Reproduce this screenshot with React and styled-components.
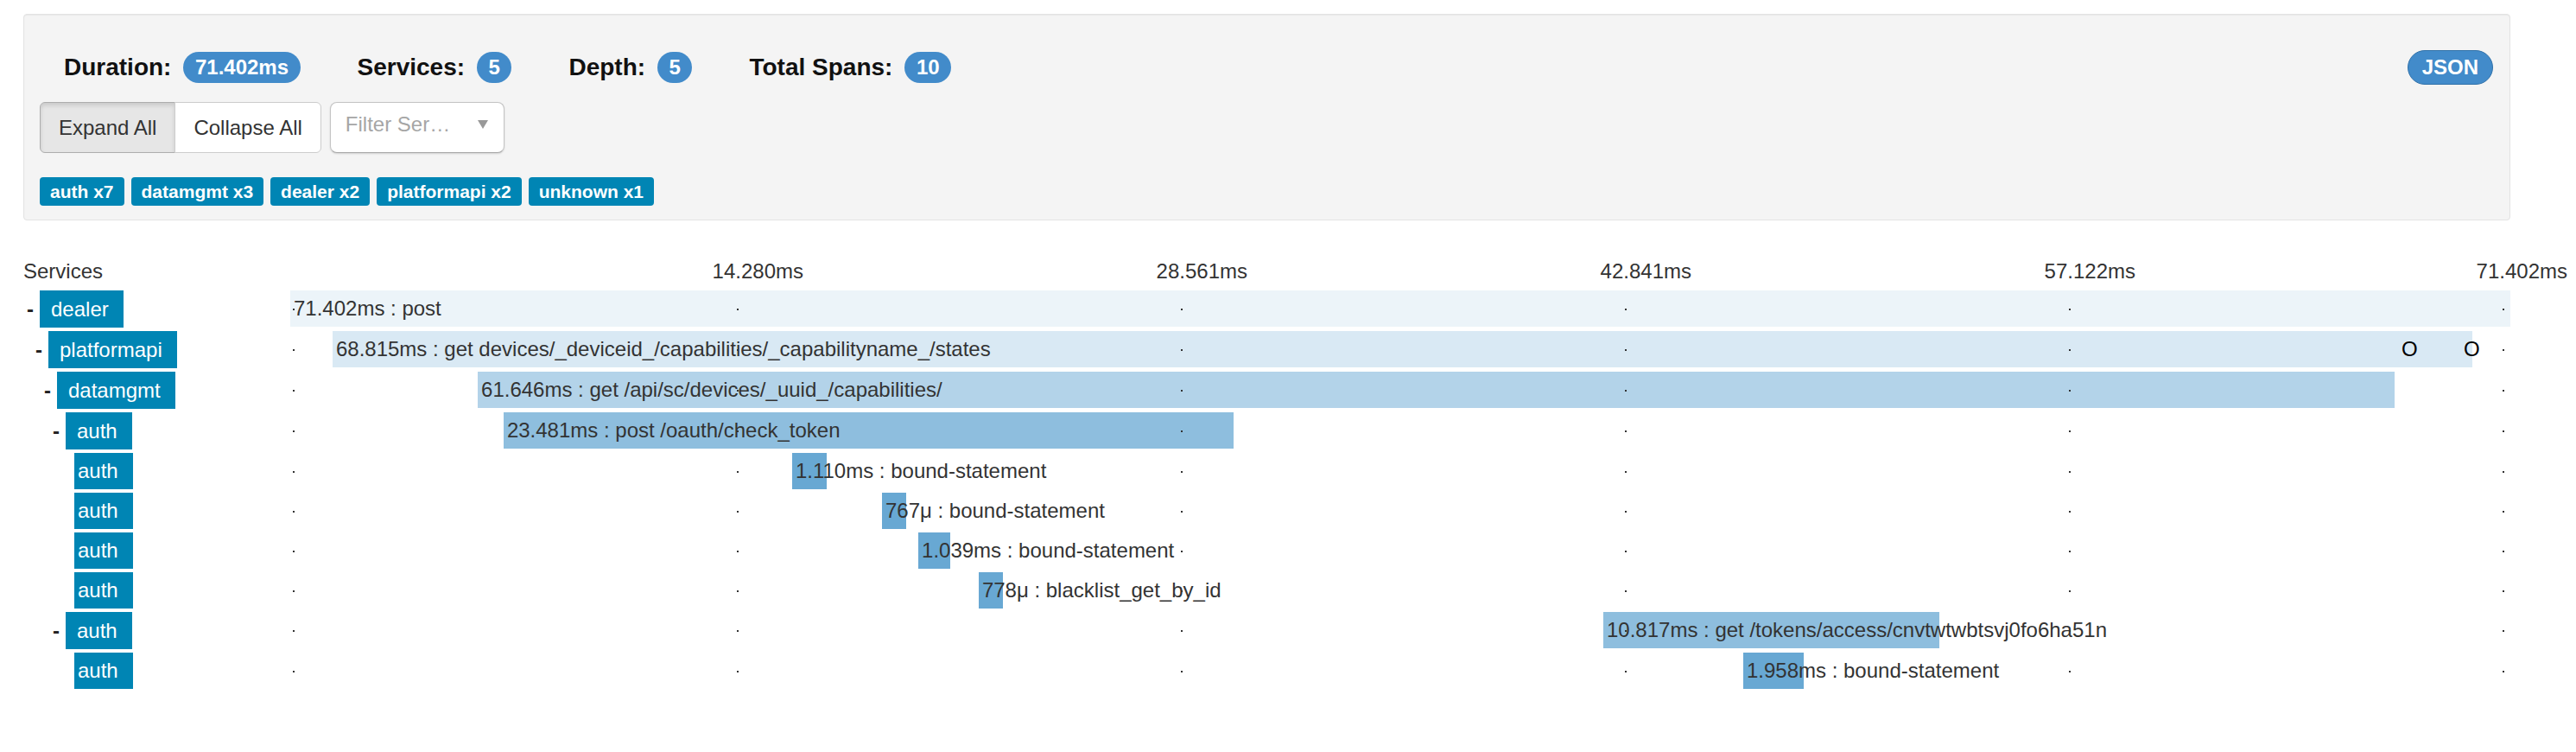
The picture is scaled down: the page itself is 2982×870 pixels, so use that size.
import React from "react";
import styled, { createGlobalStyle } from "styled-components";

const GlobalStyle = createGlobalStyle`
  body {
    margin: 0;
    background: #ffffff;
    font-family: "Liberation Sans", Arial, sans-serif;
    color: #333333;
  }
`;

const TOTAL = 71.402;

const stats = [
  { label: "Duration:", value: "71.402ms" },
  { label: "Services:", value: "5" },
  { label: "Depth:", value: "5" },
  { label: "Total Spans:", value: "10" },
];

const tags = ["auth x7", "datamgmt x3", "dealer x2", "platformapi x2", "unknown x1"];

const axis = ["14.280ms", "28.561ms", "42.841ms", "57.122ms", "71.402ms"];

// start / dur in ms
const spans = [
  { service: "dealer", depth: 0, open: true, start: 0, dur: 71.402, label: "71.402ms : post" },
  {
    service: "platformapi",
    depth: 1,
    open: true,
    start: 1.36,
    dur: 68.815,
    label: "68.815ms : get devices/_deviceid_/capabilities/_capabilityname_/states",
    marks: [95.1, 97.9],
  },
  { service: "datamgmt", depth: 2, open: true, start: 6.03, dur: 61.646, label: "61.646ms : get /api/sc/devices/_uuid_/capabilities/" },
  { service: "auth", depth: 3, open: true, start: 6.86, dur: 23.481, label: "23.481ms : post /oauth/check_token" },
  { service: "auth", depth: 4, start: 16.14, dur: 1.11, label: "1.110ms : bound-statement" },
  { service: "auth", depth: 4, start: 19.03, dur: 0.767, label: "767μ : bound-statement" },
  { service: "auth", depth: 4, start: 20.2, dur: 1.039, label: "1.039ms : bound-statement" },
  { service: "auth", depth: 4, start: 22.14, dur: 0.778, label: "778μ : blacklist_get_by_id" },
  { service: "auth", depth: 3, open: true, start: 42.23, dur: 10.817, label: "10.817ms : get /tokens/access/cnvtwtwbtsvj0fo6ha51n" },
  { service: "auth", depth: 4, start: 46.73, dur: 1.958, label: "1.958ms : bound-statement" },
];

const barAlpha = [0.1, 0.2, 0.4, 0.6, 0.8];
const tickLefts = ["3px", "calc(20% + 3px)", "calc(40% + 3px)", "calc(60% + 3px)", "calc(80% + 3px)", "calc(100% - 9px)"];

const Page = styled.div`
  width: 2879px;
  padding: 16px 0 40px 27px;
`;

/* 상단 요약 패널 */
const Panel = styled.div`
  background: #f4f4f4;
  border: 1px solid #e3e3e3;
  border-radius: 4px;
  box-shadow: inset 0 1px 1px rgba(0, 0, 0, 0.05);
  padding: 41px 19px 16px 18px;
`;

const StatsRow = styled.div`
  display: flex;
  align-items: center;
  height: 40px;
  padding-left: 28px;
`;

const StatItem = styled.div`
  display: flex;
  align-items: center;
  gap: 14px;
  margin-right: 66px;
`;

const StatLabel = styled.span`
  font-size: 28px;
  font-weight: bold;
  color: #111111;
`;

const CountBadge = styled.span`
  display: inline-flex;
  align-items: center;
  height: 36px;
  padding: 0 13.5px;
  border-radius: 18px;
  background: #428bca;
  color: #ffffff;
  font-size: 24px;
  font-weight: bold;
`;

const JsonBadge = styled.span`
  margin-left: auto;
  display: inline-flex;
  align-items: center;
  box-sizing: border-box;
  height: 40px;
  padding: 0 16px;
  border: 1px solid #3071a9;
  border-radius: 20px;
  background: #428bca;
  color: #ffffff;
  font-size: 24px;
  font-weight: bold;
`;

const Toolbar = styled.div`
  display: flex;
  gap: 10px;
  margin-top: 20px;
`;

const ButtonGroup = styled.div`
  display: flex;
`;

const ToolButton = styled.button`
  font-family: inherit;
  font-size: 24px;
  line-height: 35px;
  padding: 11px 21px;
  color: #333333;
  cursor: pointer;
  background: ${(p) => (p.$active ? "#e6e6e6" : "#ffffff")};
  border: 1px solid ${(p) => (p.$active ? "#adadad" : "#cccccc")};
  box-shadow: ${(p) => (p.$active ? "inset 0 3px 5px rgba(0, 0, 0, 0.125)" : "none")};
  border-radius: 6px 0 0 6px;

  & + & {
    margin-left: -1px;
    border-radius: 0 6px 6px 0;
  }
`;

const FilterSelect = styled.div`
  box-sizing: border-box;
  width: 202px;
  height: 59px;
  display: flex;
  align-items: center;
  padding: 0 18px 7px 17px;
  background: #ffffff;
  border: 1px solid #c4c4c4;
  border-bottom-color: #a8a8a8;
  border-radius: 8px;
  box-shadow: 0 1px 2px rgba(0, 0, 0, 0.15);
`;

const Placeholder = styled.span`
  width: 132px;
  font-size: 24px;
  color: #a6a6a6;
  white-space: nowrap;
  overflow: hidden;
  text-overflow: ellipsis;
`;

const Caret = styled.span`
  margin-left: auto;
  width: 0;
  height: 0;
  border-left: 6.5px solid transparent;
  border-right: 6.5px solid transparent;
  border-top: 10px solid #999999;
`;

const TagList = styled.div`
  display: flex;
  gap: 8px;
  margin-top: 28px;
`;

const Tag = styled.span`
  height: 33px;
  line-height: 33px;
  padding: 0 12px;
  border-radius: 4px;
  background: #0085b4;
  color: #ffffff;
  font-size: 21px;
  font-weight: bold;
`;

/* 트레이스 타임라인 */
const Trace = styled.div`
  margin-top: 45px;
`;

const AxisRow = styled.div`
  display: grid;
  grid-template-columns: 309px 2570px;
  height: 28px;
  line-height: 28px;
  font-size: 24px;
  color: #333333;
  margin-bottom: 8px;
`;

const AxisLabels = styled.div`
  display: grid;
  grid-template-columns: repeat(4, 514px) 500px;
  width: max-content;
  margin-left: 80px;
  text-align: right;
`;

const TraceRow = styled.div`
  display: grid;
  grid-template-columns: 309px 2570px;
  height: ${(p) => (p.$open ? 43 : 42)}px;
  margin-bottom: 4px;
`;

const ServiceCell = styled.div`
  display: flex;
  padding-left: ${(p) => p.$depth * 10}px;
`;

const Toggle = styled.span`
  box-sizing: border-box;
  width: 19px;
  padding-left: 4px;
  align-self: center;
  font-size: 24px;
  font-weight: bold;
  color: #222222;
`;

const ServiceName = styled.span`
  display: flex;
  align-items: center;
  background: #0085b4;
  color: #ffffff;
  font-size: 24px;
  padding: 0 17px 0 ${(p) => (p.$open ? 13 : 4)}px;
`;

const Track = styled.div`
  position: relative;
  height: 42px;
`;

const Bar = styled.div`
  box-sizing: border-box;
  height: 42px;
  line-height: 42px;
  padding-left: 4px;
  font-size: 24px;
  color: #333333;
  white-space: nowrap;
  background: rgba(66, 146, 200, ${(p) => p.$alpha});
`;

const Tick = styled.span`
  position: absolute;
  top: 21px;
  left: ${(p) => p.$left};
  width: 2px;
  height: 2px;
  background: #333333;
`;

const Mark = styled.span`
  position: absolute;
  top: 0;
  left: ${(p) => p.$left}%;
  line-height: 42px;
  font-size: 24px;
  color: #000000;
`;

const pct = (ms) => (ms / TOTAL) * 100;

export default function App() {
  return (
    <Page>
      <GlobalStyle />
      <Panel>
        <StatsRow>
          {stats.map((s) => (
            <StatItem key={s.label}>
              <StatLabel>{s.label}</StatLabel>
              <CountBadge>{s.value}</CountBadge>
            </StatItem>
          ))}
          <JsonBadge>JSON</JsonBadge>
        </StatsRow>
        <Toolbar>
          <ButtonGroup>
            <ToolButton $active>Expand All</ToolButton>
            <ToolButton>Collapse All</ToolButton>
          </ButtonGroup>
          <FilterSelect>
            <Placeholder>Filter Services...</Placeholder>
            <Caret />
          </FilterSelect>
        </Toolbar>
        <TagList>
          {tags.map((t) => (
            <Tag key={t}>{t}</Tag>
          ))}
        </TagList>
      </Panel>

      <Trace>
        <AxisRow>
          <span>Services</span>
          <AxisLabels>
            {axis.map((a) => (
              <span key={a}>{a}</span>
            ))}
          </AxisLabels>
        </AxisRow>
        {spans.map((s, i) => (
          <TraceRow key={i} $open={s.open}>
            <ServiceCell $depth={s.depth}>
              <Toggle>{s.open ? "-" : ""}</Toggle>
              <ServiceName $open={s.open}>{s.service}</ServiceName>
            </ServiceCell>
            <Track>
              <Bar
                $alpha={barAlpha[s.depth]}
                style={{ marginLeft: `${pct(s.start)}%`, width: `${pct(s.dur)}%` }}
              >
                {s.label}
              </Bar>
              {tickLefts.map((l) => (
                <Tick key={l} $left={l} />
              ))}
              {(s.marks || []).map((m) => (
                <Mark key={m} $left={m}>
                  O
                </Mark>
              ))}
            </Track>
          </TraceRow>
        ))}
      </Trace>
    </Page>
  );
}
